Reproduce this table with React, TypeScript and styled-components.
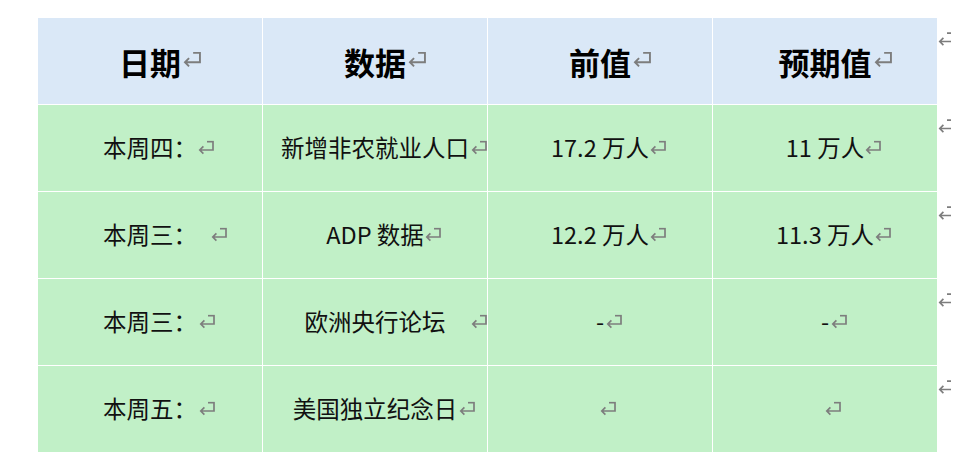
import React from "react";
import styled, { createGlobalStyle } from "styled-components";

const Global = createGlobalStyle`
  html, body { margin: 0; padding: 0; background: #ffffff; }
  body { font-family: "Noto Sans CJK SC", "Noto Sans", sans-serif; }
`;

const Page = styled.div`
  width: 969px;
  height: 465px;
  box-sizing: border-box;
  padding: 18px 0 0 38px;
  overflow: hidden;
`;

const Table = styled.div`
  display: grid;
  grid-template-columns: repeat(4, 224px) 13px;
  grid-auto-rows: 86px;
  gap: 1px;
`;

const Cell = styled.div<{ $head?: boolean }>`
  display: flex;
  align-items: center;
  justify-content: center;
  background: ${(p) => (p.$head ? "#dae8f7" : "#c1f0c7")};
  font-size: ${(p) => (p.$head ? 31 : 23.5)}px;
  font-weight: ${(p) => (p.$head ? 700 : 400)};
  color: ${(p) => (p.$head ? "#000" : "#111")};
`;

const Content = styled.span`
  position: relative;
  white-space: pre;
  line-height: 1;
`;

const MarkSlot = styled.span<{ $gap: number; $dy: number }>`
  position: absolute;
  left: calc(100% + ${(p) => p.$gap}px);
  top: 50%;
  transform: translateY(calc(-50% + ${(p) => p.$dy}px));
  display: flex;
`;

const EndCell = styled.div`
  overflow: hidden;
  padding-top: 10px;
  box-sizing: border-box;
`;

const Mark = ({ w, h }: { w: number; h: number }) => (
  <svg width={w} height={h} viewBox="0 0 16 15" fill="none">
    <path
      d="M9 1.2 H15 V9.5 H1.8 M5.4 5.9 L1.8 9.5 L5.4 13.1"
      stroke="#7d7d7d"
      strokeWidth="1.7"
    />
  </svg>
);

type Item = { t: string; g: number };

const head: Item[] = [
  { t: "日期", g: 1 },
  { t: "数据", g: 1 },
  { t: "前值", g: 1 },
  { t: "预期值", g: 1 },
];

const rows: Item[][] = [
  [
    { t: "本周四：", g: 1 },
    { t: "新增非农就业人口", g: 2 },
    { t: "17.2 万人", g: 1 },
    { t: "11 万人", g: 1 },
  ],
  [
    { t: "本周三：", g: 14 },
    { t: "ADP 数据", g: 1 },
    { t: "12.2 万人", g: 1 },
    { t: "11.3 万人", g: 1 },
  ],
  [
    { t: "本周三：", g: 2 },
    { t: "欧洲央行论坛", g: 25 },
    { t: "-", g: 2 },
    { t: "-", g: 2 },
  ],
  [
    { t: "本周五：", g: 2 },
    { t: "美国独立纪念日", g: 2 },
    { t: "", g: 0 },
    { t: "", g: 0 },
  ],
];

export default function App() {
  return (
    <>
      <Global />
      <Page>
        <Table>
          {head.map((c, i) => (
            <Cell $head key={"h" + i}>
              <Content>
                {c.t}
                <MarkSlot $gap={c.g} $dy={-1}>
                  <Mark w={20} h={17} />
                </MarkSlot>
              </Content>
            </Cell>
          ))}
          <EndCell>
            <Mark w={16} h={15} />
          </EndCell>
          {rows.map((r, ri) => (
            <React.Fragment key={"r" + ri}>
              {r.map((c, ci) => (
                <Cell key={ci}>
                  <Content>
                    {c.t}
                    <MarkSlot $gap={c.g} $dy={0}>
                      <Mark w={16} h={15} />
                    </MarkSlot>
                  </Content>
                </Cell>
              ))}
              <EndCell>
                <Mark w={16} h={15} />
              </EndCell>
            </React.Fragment>
          ))}
        </Table>
      </Page>
    </>
  );
}
